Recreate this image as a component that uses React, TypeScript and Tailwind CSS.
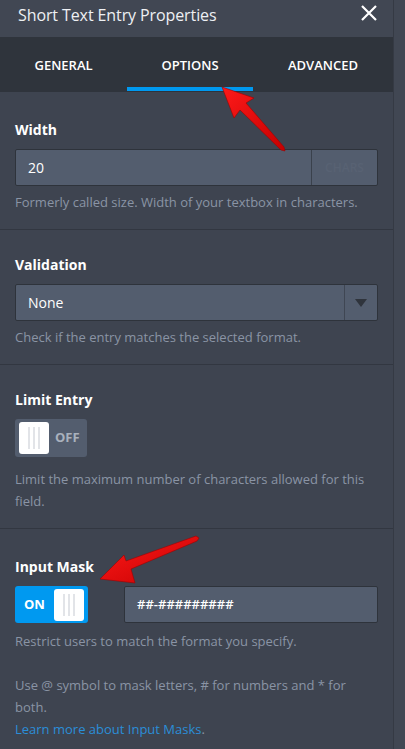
import React from "react";

function Section({ label, children, last, top = "pt-[25px]" }: { label: string; children: React.ReactNode; last?: boolean; top?: string }) {
  return (
    <div className={`shrink-0 px-[15px] ${top} pb-[16px] ${last ? "" : "border-b border-[#323741]"}`}>
      <div className="text-[14px] font-bold text-white leading-[20px] mb-[9px]">{label}</div>
      {children}
    </div>
  );
}

function Help({ children, className = "mt-[5px]" }: { children: React.ReactNode; className?: string }) {
  return <p className={`text-[13px] leading-[22px] text-[#8a94a5] ${className}`}>{children}</p>;
}

function Knob() {
  return (
    <div className="w-[30px] h-[32px] bg-white rounded-[3px] flex items-center justify-center gap-[3px]">
      <span className="w-[2px] h-[22px] bg-[#e2e4e8]" />
      <span className="w-[2px] h-[22px] bg-[#e2e4e8]" />
      <span className="w-[2px] h-[22px] bg-[#e2e4e8]" />
    </div>
  );
}

function Arrow({ points }: { points: string }) {
  return (
    <svg className="absolute left-0 top-0 pointer-events-none" width="405" height="749" viewBox="0 0 405 749">
      <defs>
        <linearGradient id="ar" x1="0" y1="0" x2="1" y2="1">
          <stop offset="0" stopColor="#ff1a1a" />
          <stop offset="1" stopColor="#c40000" />
        </linearGradient>
      </defs>
      <polygon points={points} fill="url(#ar)" stroke="#a00000" strokeWidth="0.6" strokeLinejoin="round" />
    </svg>
  );
}

export default function App() {
  return (
    <div className="relative w-[405px] h-[749px] overflow-hidden flex bg-[#3e4450]" style={{ fontFamily: '"Open Sans", "Noto Sans", sans-serif' }}>
      <div className="w-[393px] flex flex-col">
        {/* Header */}
        <div className="shrink-0 h-[37px] bg-[#414753] flex items-start justify-between pl-[18px] pr-[16px] pt-[4px]">
          <span className="text-[16px] text-[#eef0f3] leading-[22px] tracking-[-0.1px]">Short Text Entry Properties</span>
          <svg width="16" height="16" viewBox="0 0 16 16" className="mt-[1px]">
            <path d="M1 1 L15 15 M15 1 L1 15" stroke="#ffffff" strokeWidth="2.2" />
          </svg>
        </div>
        {/* Tabs */}
        <div className="shrink-0 h-[55px] bg-[#2f343c] flex">
          <div className="w-[127px] flex items-center justify-center text-[13px] font-semibold text-white pt-[2px]">GENERAL</div>
          <div className="w-[126px] flex items-center justify-center relative">
            <span className="text-[13px] font-semibold text-white pt-[2px]">OPTIONS</span>
            <span className="absolute bottom-[1px] left-0 right-0 h-[4px] bg-[#0099f0]" />
          </div>
          <div className="flex-1 flex items-center justify-center text-[13px] font-semibold text-white pt-[2px]">ADVANCED</div>
        </div>
        {/* Content */}
        <div className="shrink-0 flex flex-col">
          <Section label="Width" top="pt-[28px]">
            <div className="flex h-[37px] border border-[#2e333b] rounded-[2px] bg-[#535d6e]">
              <div className="flex-1 flex items-center pl-[12px] text-[14px] text-white">20</div>
              <div className="w-[66px] border-l border-[#3a414c] flex items-center justify-center text-[12px] font-semibold text-[#586273]">CHARS</div>
            </div>
            <Help>Formerly called size. Width of your textbox in characters.</Help>
          </Section>
          <Section label="Validation">
            <div className="flex h-[37px] border border-[#2e333b] rounded-[2px] bg-[#535d6e]">
              <div className="flex-1 flex items-center pl-[12px] text-[14px] text-white">None</div>
              <div className="w-[33px] border-l border-[#3f4653] flex items-center justify-center">
                <svg width="12" height="8" viewBox="0 0 12 8"><path d="M0 0 H12 L6 8 Z" fill="#2f343c" /></svg>
              </div>
            </div>
            <Help>Check if the entry matches the selected format.</Help>
          </Section>
          <Section label="Limit Entry">
            <div className="w-[72px] h-[38px] rounded-[3px] bg-[#535d6e] flex items-center pl-[4px] gap-[6px]">
              <Knob />
              <span className="text-[13px] font-bold text-[#a9b1bd]">OFF</span>
            </div>
            <Help className="mt-[11px]">Limit the maximum number of characters allowed for this field.</Help>
          </Section>
          <Section label="Input Mask" last top="pt-[28px]">
            <div className="flex items-center">
              <div className="w-[73px] h-[37px] rounded-[3px] bg-[#0099f0] flex items-center justify-between pl-[9px] pr-[4px]">
                <span className="text-[13px] font-bold text-white">ON</span>
                <Knob />
              </div>
              <div className="ml-[36px] flex-1 h-[37px] border border-[#2e333b] rounded-[2px] bg-[#535d6e] flex items-center pl-[12px] text-[13px] font-semibold text-white">
                ##-#########
              </div>
            </div>
            <Help className="mt-[7px]">Restrict users to match the format you specify.</Help>
            <p className="text-[13px] leading-[22px] text-[#8a94a5] mt-[22px]">
              Use @ symbol to mask letters, # for numbers and * for both.
              <br />
              <span className="text-[#2b8ed8]">Learn more about Input Masks</span>.
            </p>
          </Section>
        </div>
      </div>
      {/* Scroll strip */}
      <div className="w-[12px] bg-[#414753] border-l border-[#353a44]" />

      <Arrow points="222,87 254,98 246,103 284,147 285,151 281,150 240,110 234,118" />
      <Arrow points="100,579 124,555 126,561 196,536 199,538 197,541 131,569 135,583" />
    </div>
  );
}
